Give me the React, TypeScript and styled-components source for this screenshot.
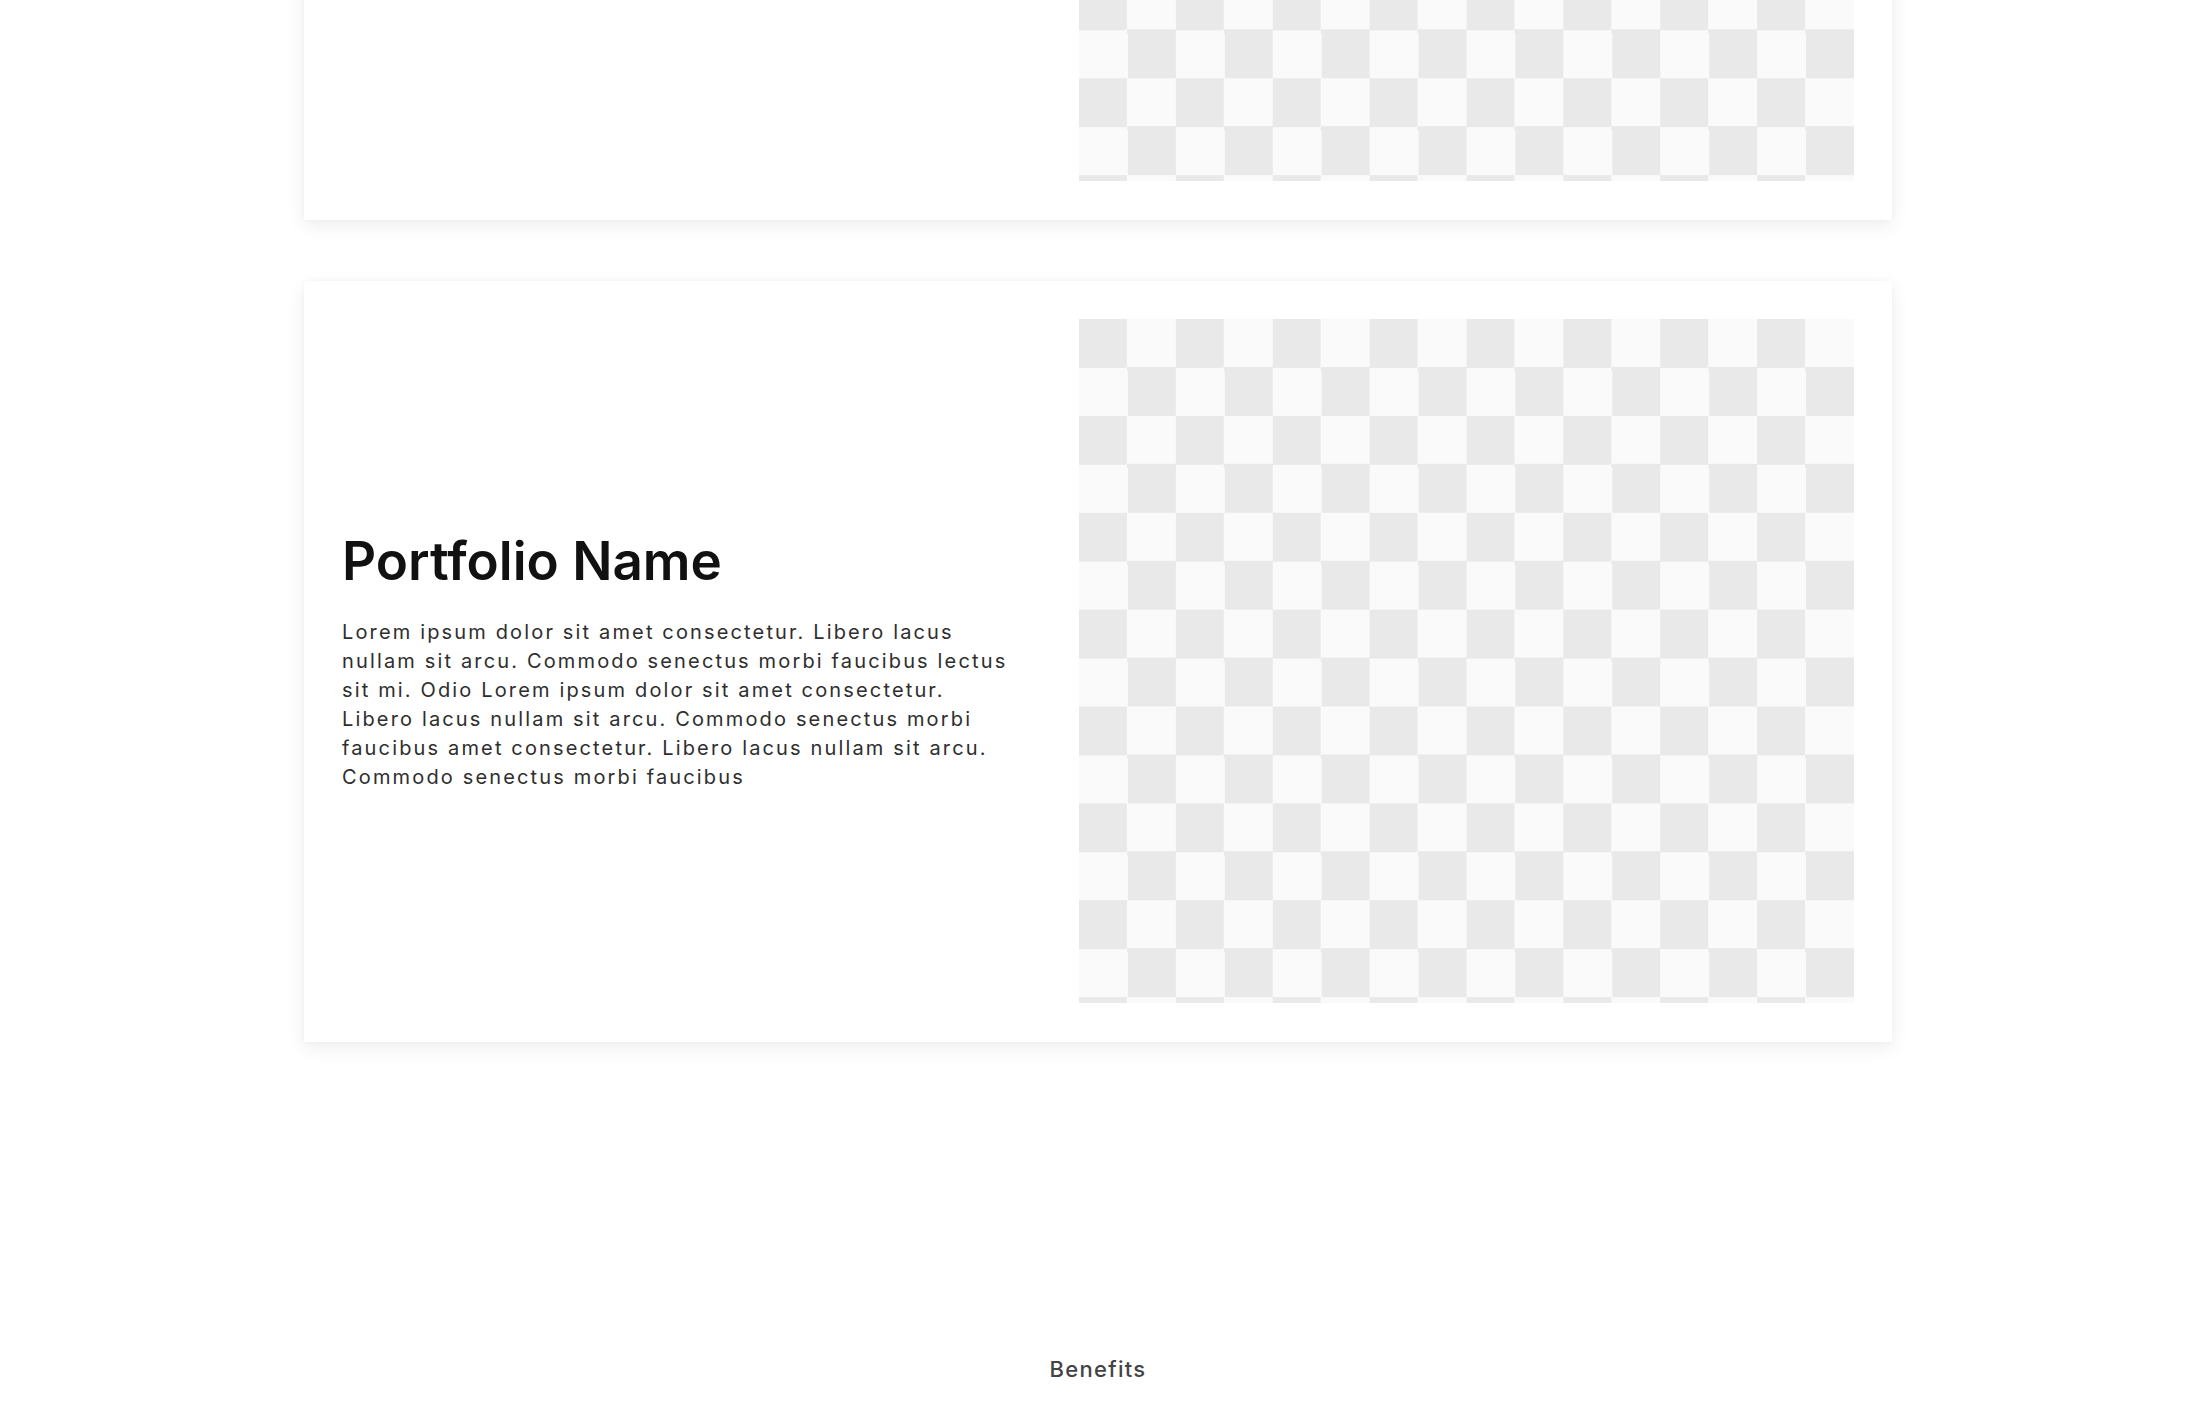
import React from "react";
import styled, { createGlobalStyle } from "styled-components";

const GlobalStyle = createGlobalStyle`
  html, body {
    margin: 0;
    padding: 0;
    background: #ffffff;
    font-family: Inter, "Noto Sans", "Liberation Sans", sans-serif;
  }
  * { box-sizing: border-box; }
`;

const Page = styled.main`
  width: 100%;
  overflow: hidden;
  height: 1404px;
`;

const Scroller = styled.div`
  margin-top: -541px;
  display: flex;
  flex-direction: column;
  align-items: center;
`;

const CardList = styled.section`
  display: flex;
  flex-direction: column;
  gap: 61px;
  width: 1588px;
`;

const Card = styled.article`
  display: grid;
  grid-template-columns: 1fr 775px;
  column-gap: 38px;
  padding: 38px 38px 39px 38px;
  background: #ffffff;
  box-shadow: 0 6px 18px rgba(0, 0, 0, 0.07), 0 0 6px rgba(0, 0, 0, 0.03);
`;

const TextCol = styled.div`
  display: flex;
  flex-direction: column;
  justify-content: center;
`;

const Title = styled.h2`
  margin: 0 0 24px 0;
  font-family: Inter, "Noto Sans", sans-serif;
  font-size: 53px;
  font-weight: 600;
  letter-spacing: 0;
  line-height: 1.2;
  color: #111111;
`;

const Body = styled.p`
  margin: 0;
  font-family: Inter, "Noto Sans", sans-serif;
  font-size: 20px;
  line-height: 29px;
  letter-spacing: 2.15px;
  color: #2e2e2e;
  white-space: nowrap;
`;

const Checker = styled.div`
  height: 684px;
  background: repeating-conic-gradient(#fafafa 0 25%, #e9e9e9 0 50%) 0 0 /
    96.875px 96.875px;
`;

const Benefits = styled.div`
  padding-top: 314px;
  font-family: Inter, "Noto Sans", sans-serif;
  font-size: 22px;
  font-weight: 500;
  letter-spacing: 1.3px;
  color: #444444;
  text-align: center;
`;

const lines = [
  "Lorem ipsum dolor sit amet consectetur. Libero lacus",
  "nullam sit arcu. Commodo senectus morbi faucibus lectus",
  "sit mi. Odio Lorem ipsum dolor sit amet consectetur.",
  "Libero lacus nullam sit arcu. Commodo senectus morbi",
  "faucibus amet consectetur. Libero lacus nullam sit arcu.",
  "Commodo senectus morbi faucibus",
];

const PortfolioCard: React.FC = () => (
  <Card>
    <TextCol>
      <Title>Portfolio Name</Title>
      <Body>
        {lines.map((l, i) => (
          <React.Fragment key={i}>
            {l}
            {i < lines.length - 1 && <br />}
          </React.Fragment>
        ))}
      </Body>
    </TextCol>
    <Checker />
  </Card>
);

export default function App() {
  return (
    <>
      <GlobalStyle />
      <Page>
        <Scroller>
          <CardList>
            <PortfolioCard />
            <PortfolioCard />
          </CardList>
          <Benefits>Benefits</Benefits>
        </Scroller>
      </Page>
    </>
  );
}
